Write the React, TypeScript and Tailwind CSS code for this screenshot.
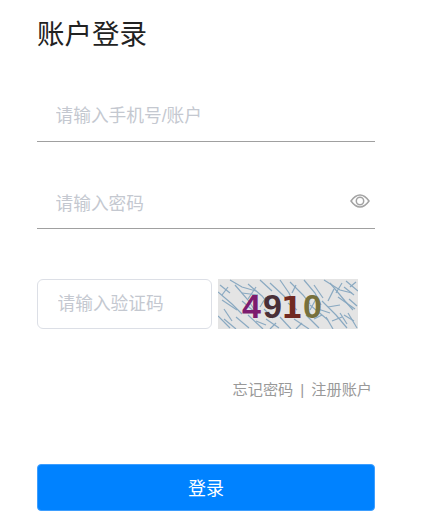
const font = "font-['Liberation_Sans','Noto_Sans_CJK_SC',sans-serif]"

// captcha noise, roughly traced from the picture
const noise = [
  "M12 1 L24 8 L38 12", "M17 6 L30 21 L36 30", "M0 13 L14 25 L24 35", "M4 21 L19 31", "M2 6 L12 14",
  "M30 5 L44 17 L52 27", "M42 1 L54 12", "M52 4 L67 18", "M62 1 L71 14 L75 23", "M24 14 L40 16",
  "M38 8 L30 20", "M48 18 L42 28", "M72 3 L85 16 L92 25", "M86 1 L97 14 L103 26", "M96 6 L105 19",
  "M78 6 L74 14", "M106 1 L122 11 L134 14", "M112 4 L127 22 L135 31", "M128 2 L140 12", "M120 18 L137 30",
  "M104 22 L118 36 L129 49", "M92 26 L110 41", "M130 34 L139 49", "M0 37 L12 49", "M6 40 L18 50",
  "M18 38 L31 49", "M30 36 L45 50", "M48 40 L61 49", "M62 38 L73 50", "M76 40 L91 50", "M88 36 L101 49",
  "M108 38 L115 50", "M122 34 L129 45", "M24 22 L39 35", "M10 8 L4 16", "M70 24 L79 31", "M98 20 L92 31",
  "M136 16 L126 8", "M46 30 L55 39", "M116 10 L110 22", "M131 20 L139 27", "M124 4 L118 14", "M110 28 L122 26",
  "M96 40 L104 36", "M114 42 L124 38", "M38 42 L48 46", "M58 44 L52 50", "M84 44 L78 50", "M132 8 L138 3",
  "M100 30 L112 34", "M6 30 L14 42", "M126 36 L136 42",
]

function App() {
  return (
    <div className={`${font} h-[529px] w-[434px] overflow-hidden bg-white pl-[37px]`}>
      <h1 className="pt-[17px] text-[27.5px] leading-9 font-normal text-[#222]">账户登录</h1>
      <div className="mt-[29px] w-[338px]">
        <input
          placeholder="请输入手机号/账户"
          className="h-[60px] w-full border-b border-[#a0a0a0] pt-[10px] pl-[18.5px] text-[17.7px] outline-none placeholder:text-[#c4c8d0]"
        />
        <div className="relative mt-[27px]">
          <input
            placeholder="请输入密码"
            className="h-[60px] w-full border-b border-[#a0a0a0] pt-[12px] pl-[18.5px] text-[17.7px] outline-none placeholder:text-[#c4c8d0]"
          />
          <svg className="absolute top-[25px] right-[5px]" width="20" height="14" viewBox="0 0 20 14" fill="none" stroke="#a3a3a3" strokeWidth="1.5">
            <path d="M1 7 C4 2.8 7 1 10 1 C13 1 16 2.8 19 7 C16 11.2 13 13 10 13 C7 13 4 11.2 1 7 Z" />
            <circle cx="10" cy="7" r="3.7" />
          </svg>
        </div>
        <div className="mt-[50px] flex gap-[6px]">
          <input
            placeholder="请输入验证码"
            className="h-[50px] w-[175px] rounded-[6px] border border-[#dcdfe6] pl-[19.5px] text-[17.7px] outline-none placeholder:text-[#c4c8d0]"
          />
          <svg className="h-[50px] w-[140px]" viewBox="0 0 140 50">
            <rect width="140" height="50" fill="#e4e4e4" />
            {noise.map((d) => (
              <path key={d} d={d} fill="none" stroke="#8aa9c1" strokeWidth="1.2" />
            ))}
            <g fontFamily="'Liberation Sans', sans-serif" fontWeight="700" fontSize="34">
              <text x="24" y="39" fill="#7d1c6e">4</text>
              <text x="45" y="39" fill="#4a3038">9</text>
              <text x="63" y="39" fontFamily="'DejaVu Sans', sans-serif" fontSize="31" fill="#722a22">1</text>
              <text x="85" y="39" fill="#77703c">0</text>
            </g>
          </svg>
        </div>
        <div className="mt-[51px] flex justify-end pr-[3px] text-[15.2px] leading-5 text-[#999]">
          <span>忘记密码</span>
          <span className="mx-[7px]">|</span>
          <span>注册账户</span>
        </div>
        <button
          type="button"
          className="mt-[64px] h-[47px] w-full rounded-[4px] border border-[#3d9eff] bg-[#0082ff] pt-[3px] text-[18px] text-white"
        >
          登录
        </button>
      </div>
    </div>
  )
}

export default App
